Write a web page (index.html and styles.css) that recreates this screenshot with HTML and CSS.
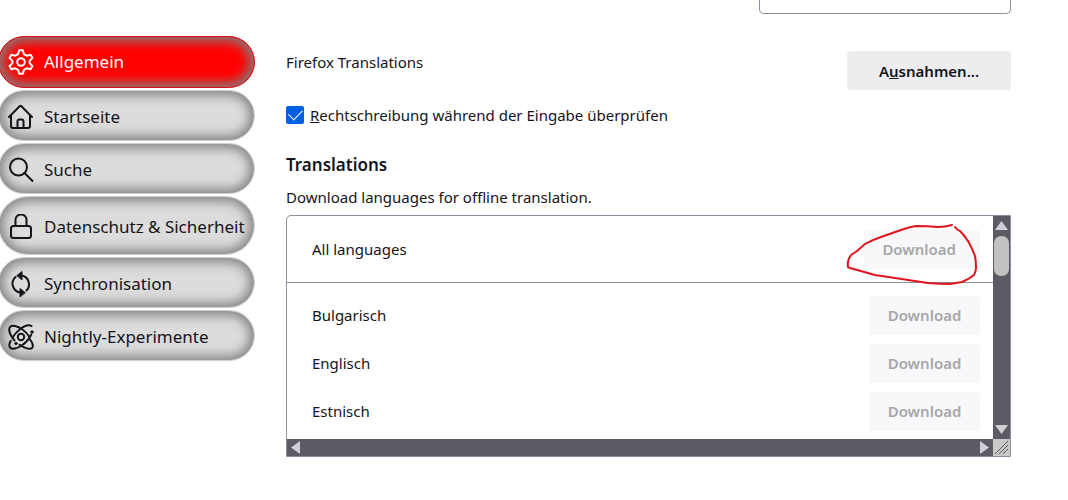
FILE: index.html
```html
<!DOCTYPE html>
<html lang="de">
<head>
    <meta charset="UTF-8">
    <meta name="viewport" content="width=device-width, initial-scale=1.0">
    <title>Einstellungen</title>
    <link rel="stylesheet" href="styles.css">
</head>
<body>
    <div class="page">
        <nav class="sidebar">
            <a href="#allgemein" class="category selected">
                <svg class="icon" viewBox="0 0 26 26"><path d="M11.200 1.200h3.600l1.200 4 2.600 1.500 4-1 1.900 3.200-2.900 3v2.200l2.900 3-1.900 3.200-4-1-2.600 1.500-1.200 4h-3.600l-1.200-4-2.600-1.500-4 1-1.900-3.200 2.900-3v-2.200l-2.900-3 1.900-3.200 4 1 2.600-1.500z"/><circle cx="13" cy="13" r="3.800"/></svg>
                <span>Allgemein</span>
            </a>
            <a href="#startseite" class="category">
                <svg class="icon" viewBox="0 0 26 26"><path d="M1 13L11.800 2q.7-.6 1.400 0L24 13M3 11.500v10.500q0 2 2 2h15q2 0 2-2V11.500M9.500 24v-6.500q0-2 2-2h2q2 0 2 2V24"/></svg>
                <span>Startseite</span>
            </a>
            <a href="#suche" class="category">
                <svg class="icon" viewBox="0 0 26 26"><circle cx="10.500" cy="10" r="8.500"/><path d="M16.500 16l8 8"/></svg>
                <span>Suche</span>
            </a>
            <a href="#datenschutz" class="category tall">
                <svg class="icon" viewBox="0 0 26 26"><rect x="3" y="12" width="20" height="12" rx="2.500"/><path d="M7.500 12V5.500a5.500 5 0 0 1 11 0V12"/></svg>
                <span>Datenschutz &amp; Sicherheit</span>
            </a>
            <a href="#sync" class="category">
                <svg class="icon" viewBox="0 0 26 26"><path d="M7.500 6A9 9 0 0 0 12 21.500M18.500 19.500A9 9 0 0 0 14 4.500"/><path class="solid" d="M9 4.500l5-4v8zM17 21.500l-5-4v8z"/></svg>
                <span>Synchronisation</span>
            </a>
            <a href="#experimente" class="category">
                <svg class="icon" viewBox="0 0 26 26"><path d="M23.200 10.500C21.500 14.500 18 18.500 14 21.300 9 24.800 4 25.800 2 23.500 .8 22 1.300 19.500 2.700 16.800M4.500 13.500C6.500 10.300 9 7.500 12 5.200 16.500 1.800 21 .5 23.500 2"/><path d="M22 15.500C25 19.500 25.500 22.500 24 24 22 25.800 16.500 24.300 11.500 20.800M6.500 16.500C2 11.500 0 5.500 2 3 4 .7 9.500 2 14.500 5.500 17.500 7.700 20 10.500 21.500 13"/><circle cx="13" cy="13" r="3.200"/><circle class="solid" cx="24" cy="8" r="1.200"/><circle class="solid" cx="8" cy="19.500" r="1.200"/></svg>
                <span>Nightly-Experimente</span>
            </a>
        </nav>

        <main class="content">
            <div class="field"></div>

            <div class="row">
                <span>Firefox Translations</span>
                <button type="button" class="btn exceptions">A<u>u</u>snahmen...</button>
            </div>

            <div class="check">
                <input type="checkbox" id="spelling" checked>
                <label for="spelling"><u>R</u>echtschreibung während der Eingabe überprüfen</label>
            </div>

            <h2>Translations</h2>
            <p>Download languages for offline translation.</p>

            <div class="list">
                <div class="languages">
                    <div class="language all">
                        <span>All languages</span>
                        <button type="button" class="btn" disabled>Download</button>
                    </div>
                    <div class="language">
                        <span>Bulgarisch</span>
                        <button type="button" class="btn" disabled>Download</button>
                    </div>
                    <div class="language">
                        <span>Englisch</span>
                        <button type="button" class="btn" disabled>Download</button>
                    </div>
                    <div class="language">
                        <span>Estnisch</span>
                        <button type="button" class="btn" disabled>Download</button>
                    </div>
                </div>
                <div class="scroll-y">
                    <svg width="13" height="9" viewBox="0 0 13 9"><path d="M6.500 0L13 9H0z"/></svg>
                    <div class="thumb"></div>
                    <svg width="13" height="9" viewBox="0 0 13 9"><path d="M0 0h13L6.500 9z"/></svg>
                </div>
                <div class="scroll-x">
                    <svg width="9" height="13" viewBox="0 0 9 13"><path d="M9 0v13L0 6.500z"/></svg>
                    <svg width="9" height="13" viewBox="0 0 9 13"><path d="M0 0l9 6.500L0 13z"/></svg>
                </div>
                <svg class="grip" viewBox="0 0 17 17"><path d="M2 15L15 2M6 15l9-9M10 15l5-5"/></svg>
                <!-- rote Markierung um den Download-Button -->
                <svg class="marker" width="134" height="64" viewBox="0 0 134 64"><path d="M108 4q-7 2-14 2-11-1-22-1-7 1-15 4l-20 7q-9 3-16 7l-8 7-6 4q-4 5-3 12l2 1 25 7 20 3 33 5q12 1 22 1l12-2q7-3 12-7 2-4 2-7 0-7-1-12-3-8-7-15-4-6-8-10-3-1-5-4"/></svg>
            </div>
        </main>
    </div>
</body>
</html>
```
FILE: styles.css
```css
* {
    box-sizing: border-box;
}

body {
    margin: 0;
    background: #fff;
    color: #15141a;
    font-family: "Noto Sans", sans-serif;
    font-size: 15px;
    line-height: 20px;
}

.page {
    display: flex;
    gap: 31px;
    padding-right: 57px;
}

/* Seitenleiste */
.sidebar {
    display: flex;
    flex-direction: column;
    gap: 2px;
    flex: 0 0 257px;
    margin-left: -2px;
    padding-top: 36px;
}

.category {
    display: flex;
    align-items: center;
    gap: 10px;
    min-height: 51px;
    padding: 2px 9px 0;
    border: 1px solid #d0d0d0;
    border-radius: 30px;
    background: #dcdcdc;
    box-shadow: inset 0 0 12px 4px #808080;
    color: #15141a;
    font-size: 17px;
    text-decoration: none;
    white-space: nowrap;
}

.category.selected {
    min-height: 52px;
    padding-top: 0;
    border-color: #d81018;
    background: #f00;
    color: #fff;
}

.category.tall {
    min-height: 59px;
}

.icon {
    flex: none;
    width: 26px;
    height: 26px;
    fill: none;
    stroke: currentColor;
    stroke-width: 2;
    stroke-linecap: round;
    stroke-linejoin: round;
}

.solid {
    fill: currentColor;
    stroke-width: 1;
}

/* Inhalt */
.content {
    flex: 1;
    min-width: 0;
}

.field {
    width: 252px;
    height: 14px;
    margin: 0 0 37px auto;
    border: 1px solid #8f8f9d;
    border-top: 0;
    border-radius: 0 0 5px 5px;
}

.row {
    display: flex;
    justify-content: space-between;
    align-items: flex-start;
}

.row span {
    padding-top: 1px;
}

.btn {
    min-width: 111px;
    height: 39px;
    padding: 0 18px;
    border: 0;
    border-radius: 4px;
    background: #ededf0;
    color: #15141a;
    font: 600 15px "Noto Sans", sans-serif;
}

.btn:disabled {
    background: #f8f8fa;
    color: #a6a6a8;
}

.exceptions {
    width: 164px;
}

.check {
    display: flex;
    align-items: center;
    gap: 6px;
    margin-top: 15px;
}

.check input {
    appearance: none;
    width: 18px;
    height: 18px;
    margin: 0;
    border-radius: 2px;
    background: #0060df;
    display: grid;
    place-items: center;
}

.check input::before {
    content: "";
    width: 12px;
    height: 7px;
    border: solid #fff;
    border-width: 0 0 1px 1px;
    transform: translateY(-2px) rotate(-45deg);
}

h2 {
    margin: 28px 0 0;
    font-size: 17px;
    font-weight: 600;
    line-height: 24px;
}

p {
    margin: 10px 0 8px;
}

/* Sprachliste */
.list {
    position: relative;
    display: grid;
    grid-template-columns: 1fr 17px;
    grid-template-rows: 1fr 17px;
    border: 1px solid #8f8f9d;
    border-radius: 5px 0 0 0;
}

.languages {
    padding-bottom: 4px;
}

.language {
    display: flex;
    justify-content: space-between;
    align-items: center;
    height: 48px;
    padding: 0 13px 0 25px;
}

.language.all {
    height: 67px;
    margin-bottom: 8px;
    border-bottom: 1px solid #8f8f9d;
}

.language.all .btn {
    padding-right: 24px;
}

.scroll-y,
.scroll-x {
    display: flex;
    align-items: center;
    background: #5b5b66;
    fill: #d0d0d4;
}

.scroll-y {
    flex-direction: column;
    padding: 5px 0;
}

.scroll-y svg:last-child {
    margin-top: auto;
}

.thumb {
    width: 15px;
    height: 40px;
    margin-top: 6px;
    border-radius: 7px;
    background: #c1c1c1;
}

.scroll-x {
    justify-content: space-between;
    padding: 0 4px;
}

.grip {
    background: #c8c8c8;
    fill: none;
    stroke: #55555c;
}

.marker {
    position: absolute;
    top: 5px;
    right: 32px;
    fill: none;
    stroke: #e0141c;
    stroke-width: 2;
    stroke-linejoin: round;
    stroke-linecap: round;
}
```
